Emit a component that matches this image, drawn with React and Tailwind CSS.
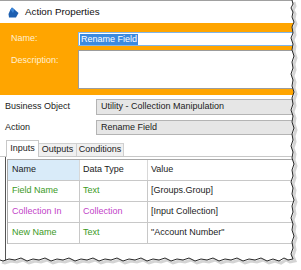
import React from "react";

const rightEdge = [
  [292, 0], [293, 4], [291, 8], [293, 12], [292, 17], [294, 22], [292, 27], [293, 33], [291, 38], [293, 44],
  [292, 50], [294, 56], [292, 62], [293, 68], [291, 74], [293, 80], [292, 86], [294, 92], [292, 98], [293, 104],
  [291, 110], [293, 116], [292, 122], [294, 128], [292, 134], [293, 140], [291, 146], [293, 152], [292, 158],
  [294, 164], [292, 170], [293, 176], [291, 182], [293, 188], [292, 194], [294, 200], [292, 206], [293, 212],
  [291, 218], [293, 224], [292, 230], [294, 236], [292, 242], [293, 248], [291, 254], [293, 259],
];
const bottomEdge = [
  [288, 260], [284, 258], [279, 261], [273, 259], [267, 261], [261, 258], [255, 260], [249, 259], [243, 261],
  [237, 258], [231, 260], [225, 259], [219, 261], [213, 258], [207, 260], [201, 259], [195, 261], [189, 258],
  [183, 260], [177, 259], [171, 261], [165, 258], [159, 260], [153, 259], [147, 261], [141, 258], [135, 260],
  [129, 259], [123, 261], [117, 258], [111, 260], [105, 259], [99, 261], [93, 258], [87, 260], [81, 259],
  [75, 261], [69, 258], [63, 260], [57, 259], [51, 261], [45, 258], [39, 260], [33, 259], [27, 261], [21, 258],
  [15, 260], [9, 259], [3, 261], [0, 260],
];
const edge = [...rightEdge, ...bottomEdge];
const edgePath = edge.map(([x, y], i) => `${i ? "L" : "M"}${x},${y}`).join(" ");
const shadowPath = edge.map(([x, y], i) => `${i ? "L" : "M"}${x + 2},${y + 2}`).join(" ");
const outside = `M301,0 ${edge.map(([x, y]) => `L${x},${y}`).join(" ")} L0,270 L301,270 Z`;

const rows = [
  { name: "Field Name", type: "Text", value: "[Groups.Group]", color: "text-[#3c9a1e]" },
  { name: "Collection In", type: "Collection", value: "[Input Collection]", color: "text-[#c23fc8]" },
  { name: "New Name", type: "Text", value: "\"Account Number\"", color: "text-[#3c9a1e]" },
];

export default function App() {
  return (
    <div className="relative w-[301px] h-[270px] overflow-hidden bg-white font-['Liberation_Sans',sans-serif] text-[9px] text-[#1b1b1b]">
      <div className="w-[330px] h-[270px] flex flex-col border-t border-[#a0a0a0] bg-white">
        {/* title bar */}
        <div className="h-[22px] flex items-center pl-[8px] gap-[6px]">
          <svg width="11" height="11" viewBox="0 0 11 11">
            <path d="M4,0.5 L6.5,2.5 L10.5,6 L8,10.5 L1,10.5 L0.5,7 L2.5,2.5 Z" fill="#1d5fb0" />
            <path d="M4,0.5 L6.5,2.5 L5,6 L2.5,2.5 Z" fill="#3c86d8" />
          </svg>
          <span className="text-[9.8px] text-[#111]">Action Properties</span>
        </div>
        {/* orange header */}
        <div className="h-[72px] bg-[#ffa500] flex flex-col pt-[9px] pl-[11px] gap-[4px]">
          <div className="flex items-center h-[14px]">
            <span className="w-[67px] text-[#fff0d2]">Name:</span>
            <div className="flex-1 h-[14px] bg-white border border-[#7fb5ea] flex items-center pl-[1px]">
              <span className="bg-[#3b8ae0] text-white leading-[11px] px-[1px]">Rename Field</span>
            </div>
          </div>
          <div className="flex items-start h-[39px]">
            <span className="w-[67px] text-[#fff0d2] pt-[4px]">Description:</span>
            <div className="flex-1 h-[39px] bg-white border border-[#9c9c9c]" />
          </div>
        </div>
        {/* business object / action */}
        <div className="flex flex-col pt-[4px] pl-[5px] gap-[5px]">
          <div className="flex items-center h-[16px]">
            <span className="w-[91px]">Business Object</span>
            <div className="flex-1 h-[16px] bg-[#e6e6e6] border border-[#b4b4b4] flex items-center pl-[4px]">Utility - Collection Manipulation</div>
          </div>
          <div className="flex items-center h-[15px]">
            <span className="w-[91px]">Action</span>
            <div className="flex-1 h-[15px] bg-[#e6e6e6] border border-[#b4b4b4] flex items-center pl-[4px]">Rename Field</div>
          </div>
        </div>
        {/* tabs */}
        <div className="mt-[6px] pl-[6px] flex items-end h-[16px] border-b border-[#c8c8c8]">
          <div className="h-[17px] w-[33px] bg-white border border-b-0 border-[#c8c8c8] flex items-center justify-center -mb-[1px]">Inputs</div>
          <div className="h-[13px] w-[38px] bg-[#f0f0f0] border border-l-0 border-b-0 border-[#d0d0d0] flex items-center justify-center">Outputs</div>
          <div className="h-[13px] w-[47px] bg-[#f0f0f0] border border-l-0 border-b-0 border-[#d0d0d0] flex items-center justify-center">Conditions</div>
        </div>
        {/* panel */}
        <div className="flex-1 ml-[5px] border-l border-[#555] pl-[1px] pt-[2px]">
          <div className="border-l border-t border-[#a9a9a9]">
            <div className="flex h-[21px] border-b border-[#c8c8c8]">
              <div className="w-[72px] bg-[#d9ebf9] flex items-center pl-[4px] border-r border-[#d8d8d8]">Name</div>
              <div className="w-[68px] flex items-center pl-[3px] border-r border-[#d8d8d8]">Data Type</div>
              <div className="flex-1 flex items-center pl-[3px]">Value</div>
            </div>
            {rows.map((r) => (
              <div key={r.name} className="flex h-[21px] border-b border-[#c8c8c8]">
                <div className={`w-[72px] flex items-center pl-[4px] border-r border-[#c8c8c8] ${r.color}`}>{r.name}</div>
                <div className={`w-[68px] flex items-center pl-[3px] border-r border-[#c8c8c8] ${r.color}`}>{r.type}</div>
                <div className="flex-1 flex items-center pl-[3px]">{r.value}</div>
              </div>
            ))}
          </div>
        </div>
      </div>
      <svg className="absolute inset-0" width="301" height="270" viewBox="0 0 301 270">
        <path d={outside} fill="#ffffff" />
        <path d={shadowPath} fill="none" stroke="#b8b8b8" strokeWidth="3" opacity="0.6" />
        <path d={edgePath} fill="none" stroke="#2a2a2a" strokeWidth="1" />
      </svg>
    </div>
  );
}
